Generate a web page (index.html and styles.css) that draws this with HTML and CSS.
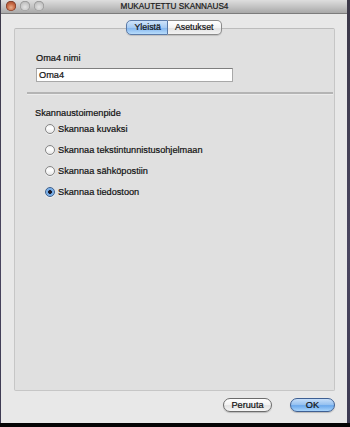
FILE: index.html
```html
<!DOCTYPE html>
<html>
<head>
<meta charset="utf-8">
<link rel="stylesheet" href="styles.css">
</head>
<body>
<div class="desktop">
  <div class="window">
    <div class="titlebar">
      <div class="lights">
        <span class="light close"></span>
        <span class="light"></span>
        <span class="light"></span>
      </div>
      <div class="title">MUKAUTETTU SKANNAUS4</div>
    </div>
    <div class="main">
      <div class="tabbox">
        <div class="tabs">
          <span class="tab selected">Yleistä</span>
          <span class="tab">Asetukset</span>
        </div>
        <div class="label name-label">Oma4 nimi</div>
        <div class="field">Oma4</div>
        <div class="separator"></div>
        <div class="label group-label">Skannaustoimenpide</div>
        <div class="radios">
          <div class="radio-row"><span class="radio"></span><span class="radio-text">Skannaa kuvaksi</span></div>
          <div class="radio-row"><span class="radio"></span><span class="radio-text">Skannaa tekstintunnistusohjelmaan</span></div>
          <div class="radio-row"><span class="radio"></span><span class="radio-text">Skannaa sähköpostiin</span></div>
          <div class="radio-row"><span class="radio checked"></span><span class="radio-text">Skannaa tiedostoon</span></div>
        </div>
      </div>
      <div class="buttons">
        <span class="button">Peruuta</span>
        <span class="button default">OK</span>
      </div>
    </div>
  </div>
</div>
</body>
</html>
```
FILE: styles.css
```css
* { box-sizing: border-box; }
html, body { margin: 0; padding: 0; }
body {
  width: 350px;
  height: 427px;
  overflow: hidden;
  font-family: "Liberation Sans", Arial, sans-serif;
  font-size: 9.2px;
  color: #111;
  -webkit-text-stroke: 0.2px #111;
}
.desktop {
  width: 350px;
  height: 427px;
  background: linear-gradient(to bottom, #3b3848, #4a4660 60%, #3d3a52);
  border-bottom: 4px solid #050505;
  padding-left: 1px;
}
.window {
  width: 346px;
  height: 423px;
  background: #e8e8e8;
  display: flex;
  flex-direction: column;
}
.titlebar {
  height: 14px;
  background: linear-gradient(to bottom, #dedede, #c4c4c4 50%, #a8a8a8);
  border-bottom: 1px solid #7c7c7c;
  display: flex;
  align-items: center;
  position: relative;
}
.lights {
  display: flex;
  gap: 4px;
  padding-left: 5px;
  margin-top: -1px;
}
.light {
  width: 10px;
  height: 10px;
  border-radius: 50%;
  background: radial-gradient(circle at 50% 60%, #e4e4e4 0%, #c4c4c4 55%, #9a9a9a 100%);
  box-shadow: inset 0 0 0 0.5px #8a8a8a;
}
.light.close {
  background: radial-gradient(circle at 50% 65%, #e8b08c 0%, #c86a45 45%, #8a3a22 100%);
  box-shadow: inset 0 0 0 0.5px #6a3020;
}
.title {
  position: absolute;
  left: 0;
  right: 0;
  top: 0;
  line-height: 13px;
  text-align: center;
  font-size: 8.2px;
  color: #1c1c1c;
  padding-left: 1px;
}
.main {
  flex: 1;
  padding: 14px 11px 0 13px;
  display: flex;
  flex-direction: column;
}
.tabbox {
  width: 321px;
  height: 363px;
  background: #e0e0e0;
  border: 1px solid #c6c6c6;
  border-top-color: #bcbcbc;
  border-radius: 2px;
  display: flex;
  flex-direction: column;
}
.tabs {
  display: flex;
  justify-content: center;
  margin-top: -9px;
  height: 15px;
  padding-right: 1px;
}
.tab {
  height: 15px;
  line-height: 13px;
  font-size: 8.8px;
  padding: 0 7px;
  border: 1px solid #8a8a8a;
  background: linear-gradient(to bottom, #ffffff, #f4f4f4 50%, #e4e4e4 55%, #f2f2f2);
  color: #111;
  border-left: none;
  border-radius: 0 5px 5px 0;
  box-shadow: 0 1px 1px rgba(0,0,0,0.15);
}
.tab.selected {
  border-left: 1px solid #5a7aa8;
  border-color: #5a7aa8;
  border-radius: 5px 0 0 5px;
  background: linear-gradient(to bottom, #cfe3fa, #a6cbf3 50%, #84b6ee 55%, #b8dcfb);
  padding: 0 6px 0 7px;
}
.label {
  line-height: 12px;
}
.name-label {
  margin-top: 17px;
  padding-left: 21px;
}
.field {
  margin-top: 4px;
  margin-left: 21px;
  width: 197px;
  height: 14px;
  background: #fff;
  border: 1px solid #a8a8a8;
  border-top-color: #7e7e7e;
  line-height: 12px;
  padding-left: 2px;
}
.separator {
  margin-top: 10px;
  margin-left: 12px;
  margin-right: 1px;
  height: 3px;
  border-top: 2px solid #b4b4b4;
  border-bottom: 1px solid #ececec;
}
.group-label {
  margin-top: 12px;
  padding-left: 20px;
}
.radios {
  margin-top: 4px;
  padding-left: 30px;
  display: flex;
  flex-direction: column;
  gap: 9px;
}
.radio-row {
  display: flex;
  align-items: center;
  gap: 3px;
  height: 12px;
}
.radio {
  width: 10px;
  height: 10px;
  border-radius: 50%;
  border: 1px solid #858585;
  background: linear-gradient(to bottom, #f0f0f0, #ffffff 40%, #e6e6e6);
  box-shadow: 0 1px 0 rgba(255,255,255,0.6);
}
.radio.checked {
  border-color: #3d5f8c;
  background: radial-gradient(circle, #1a1a2a 0, #1a1a2a 1.6px, #6ea6e2 2.2px, #9cc6f2 100%);
}
.radio-text {
  line-height: 12px;
}
.buttons {
  display: flex;
  justify-content: flex-end;
  gap: 18px;
  margin-top: 7px;
  padding-right: 1px;
}
.button {
  height: 14px;
  line-height: 12px;
  text-align: center;
  border-radius: 7px;
  border: 1px solid #6c6c6c;
  background: linear-gradient(to bottom, #ffffff, #f2f2f2 50%, #e2e2e2 55%, #f6f6f6);
  width: 49px;
  box-shadow: 0 1px 1px rgba(0,0,0,0.2);
}
.button.default {
  width: 45px;
  border-color: #3e5f92;
  background: linear-gradient(to bottom, #c6def9, #93c0f0 50%, #6aa8ec 55%, #a8d4fb);
}
```
